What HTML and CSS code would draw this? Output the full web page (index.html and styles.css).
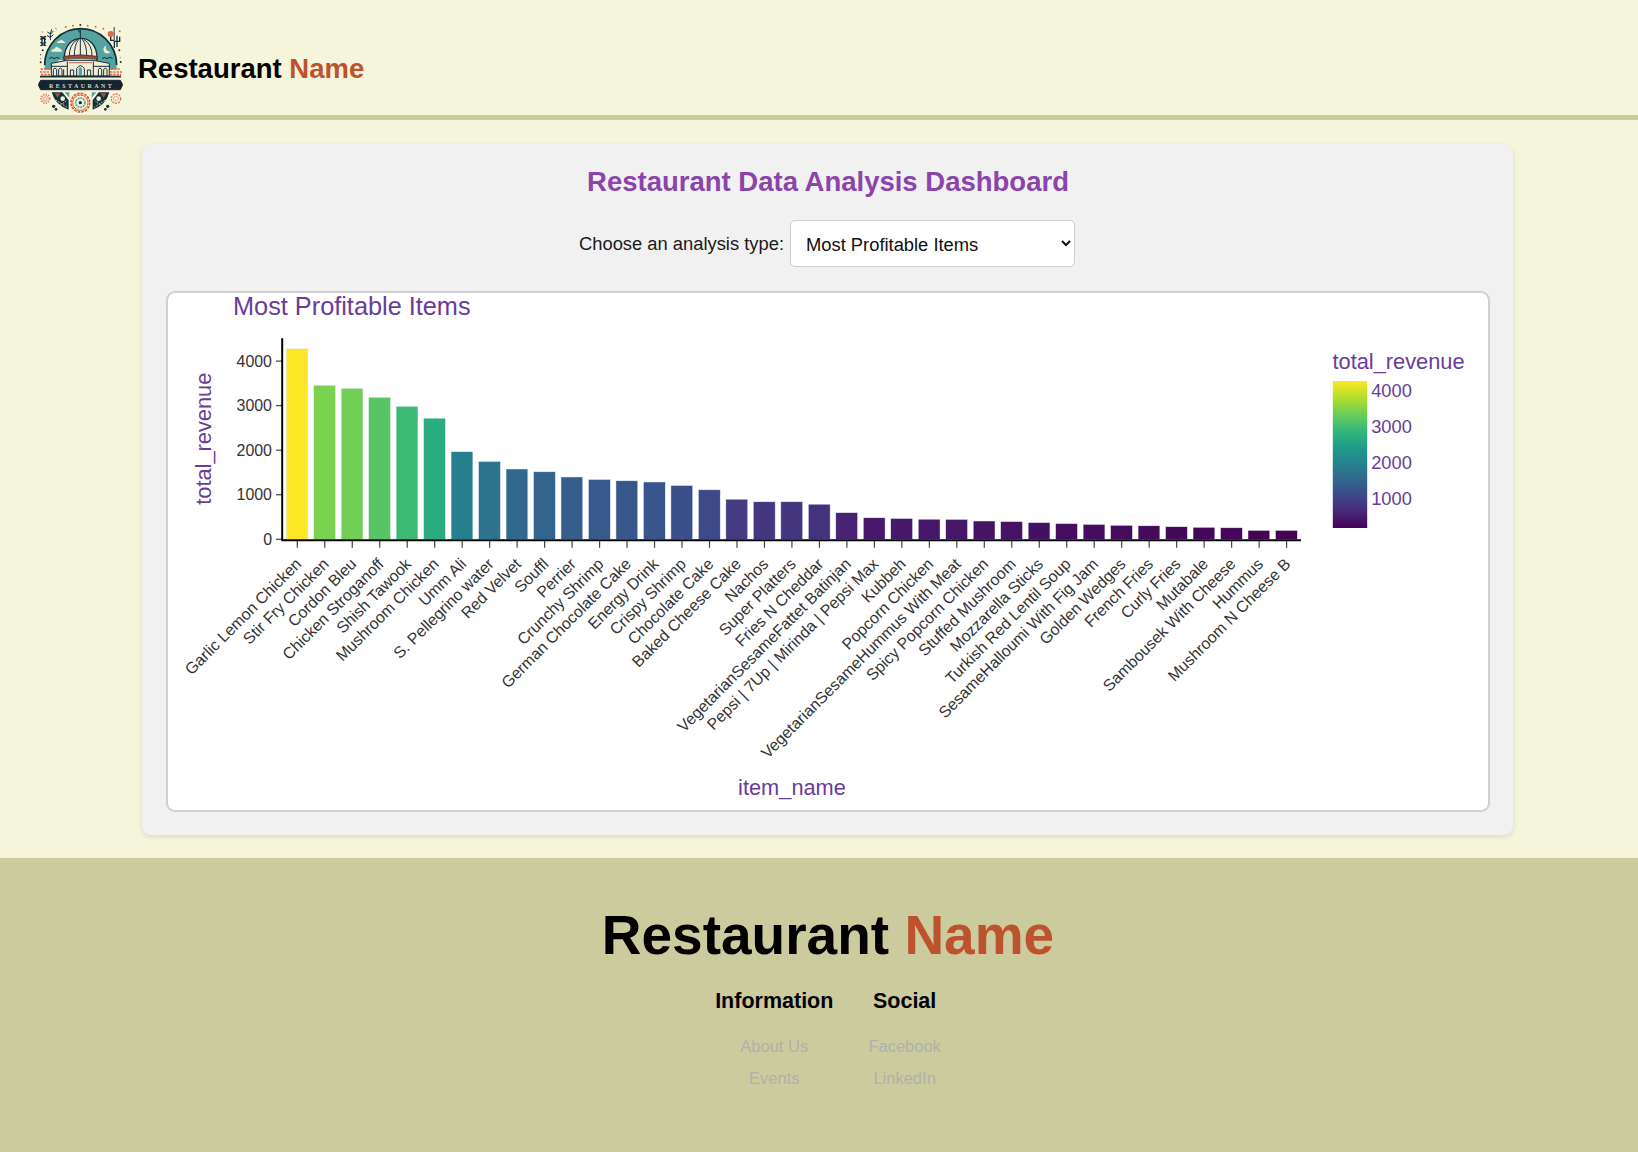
FILE: index.html
```html
<!DOCTYPE html>
<html lang="en">
<head>
<meta charset="utf-8">
<title>Restaurant Data Analysis Dashboard</title>
<link rel="stylesheet" href="styles.css">
</head>
<body>
<header class="header">
  <svg class="logo" viewBox="114 69 255 273" aria-label="Restaurant logo">
    <path d="M134 195a108 109 0 0 1 216 0v14H134z" fill="#55a3a1"/>
    <path d="M134 195a108 109 0 0 1 216 0" fill="none" stroke="#142f3a" stroke-width="5"/>
    <g fill="#f3ecd5">
      <path d="M153 155q2-9 10-8 6-13 14-2 9 2 9 10zM171 129q3-8 9-6 5-8 9 0 6 1 7 6zM171 185q12-12 20 0z"/>
      <path d="M318 137a12 12 0 1 0 14 18 13 13 0 0 1-14-18z"/>
      <path d="M193 176c-2-78 98-84 98-2l-2 12h-94z" stroke="#142f3a" stroke-width="4"/>
      <path d="M154 190l48-9h78l48 9v38H154z" stroke="#142f3a" stroke-width="3"/>
    </g>
    <g fill="none" stroke="#142f3a" stroke-width="3">
      <path d="M241 88v28M241 97q-9-2-4-10M208 172q-2-38 25-54M223 172q-1-38 14-55M241 116v56M260 172q1-38-14-55M276 172q2-38-25-54"/>
      <path d="M147 176q8-9 15 0 8-7 17-1M306 176q8-7 15 0 8-8 17-1"/>
      <path d="M154 199h48M280 199h50M160 228v-20q5-8 10 0v20M176 228v-20q5-8 10 0v20M191 228v-20M202 184v44M211 228v-18h10v18M262 228v-18h10v18M280 184v44M295 228v-20q5-8 10 0v20M311 228v-20q5-8 10 0v20M230 228v-22q12-18 23 0v22"/>
    </g>
    <path d="M236 228v-22q5-8 10 0v22z" fill="#55a3a1"/>
    <path d="M191 169q50-9 101 0v9q-50-6-101 0z" fill="#a64a35" stroke="#142f3a" stroke-width="2"/>
    <path d="M208 188h68" stroke="#a64a35" stroke-width="4" stroke-dasharray="4 2"/>
    <g fill="none" stroke="#df6849" stroke-width="5" stroke-dasharray="7 3">
      <path d="M122 207h29M120 216h31M123 224h28M332 207h29M330 216h36M330 224h34"/>
    </g>
    <path d="M120 230h243" stroke="#142f3a" stroke-width="5"/>
    <path d="M122 241h239l7 13-7 15H122l-7-15z" fill="#142430" stroke="#142430" stroke-width="3" stroke-linejoin="round"/>
    <text x="241" y="263" class="logo-text" textLength="188">RESTAURANT</text>
    <g fill="#142f3a">
      <circle cx="241" cy="75" r="3"/><circle cx="128" cy="151" r="3"/><circle cx="122" cy="164" r="2"/><circle cx="122" cy="187" r="3"/><circle cx="358" cy="151" r="3"/><circle cx="362" cy="186" r="3"/><circle cx="161" cy="319" r="5"/><circle cx="168" cy="328" r="4"/><circle cx="323" cy="319" r="5"/><circle cx="316" cy="328" r="4"/>
    </g>
    <g fill="#df6849">
      <circle cx="197" cy="81" r="3"/><circle cx="219" cy="77" r="3"/><circle cx="263" cy="77" r="3"/><circle cx="287" cy="80" r="3"/><circle cx="310" cy="86" r="3"/><circle cx="127" cy="96" r="2"/><circle cx="359" cy="94" r="3"/><circle cx="122" cy="176" r="2"/><circle cx="361" cy="172" r="2"/>
      <circle cx="332" cy="102" r="9"/><path d="M163 80l8 8-2 2zM296 117l3 6 3-5-3 12zM290 126l4-2v7z"/>
    </g>
    <path d="M343 82v62M351 107v34M343 124h16v-14M332 110v11h10" fill="none" stroke="#142f3a" stroke-width="4"/>
    <path d="M343 83v40" stroke="#f3ecd5" stroke-width="1.5"/>
    <path d="M121 109q8 5 17 0M121 118q8-5 17 0M121 127q8 5 17 0M121 137q8-5 17 0M126 109v29M134 109v29" fill="none" stroke="#142f3a" stroke-width="4"/>
    <path d="M155 88q-6 12-4 32M142 96l10 6 8-9M141 107l10 5 9-8" fill="none" stroke="#142f3a" stroke-width="3"/>
    <g fill="none">
      <circle cx="241" cy="308" r="28" stroke="#d65c3d" stroke-width="5" stroke-dasharray="8 3"/>
      <circle cx="241" cy="308" r="23" stroke="#d65c3d" stroke-width="3"/>
      <circle cx="241" cy="308" r="14" stroke="#55a3a1" stroke-width="5" stroke-dasharray="6 2"/>
      <circle cx="136" cy="296" r="12" stroke="#e0735b" stroke-width="8" stroke-dasharray="3 4"/>
      <circle cx="136" cy="296" r="5" stroke="#e0735b" stroke-width="2"/>
      <circle cx="348" cy="296" r="14" stroke="#e0735b" stroke-width="4" stroke-dasharray="6 3"/>
      <circle cx="348" cy="296" r="7" stroke="#e0735b" stroke-width="3" stroke-dasharray="3 2"/>
    </g>
    <circle cx="241" cy="308" r="5" fill="#142f3a"/>
    <path d="M155 277h32l19 24v28q-40-13-51-52zM328 277h-32l-18 24v28q40-13 50-52z" fill="#142f3a"/>
    <path d="M164 280h18l-10 13zM319 280h-18l10 13z" fill="#a64a35"/>
    <path d="M194 277h14v16zM289 277h-14v16z" fill="#55a3a1"/>
    <g fill="#f3ecd5"><circle cx="188" cy="296" r="7"/><circle cx="296" cy="296" r="7"/></g>
    <path d="M169 301l32 21M180 316l20-14M315 301l-32 21M304 316l-20-14" stroke="#f3ecd5" stroke-width="3" stroke-dasharray="3 3"/>
  </svg>
  <h1 class="brand">Restaurant <span class="accent">Name</span></h1>
</header>

<main class="panel">
  <h2 class="panel-title">Restaurant Data Analysis Dashboard</h2>
  <div class="picker">
    <label for="analysis">Choose an analysis type:</label>
    <select id="analysis" class="select"><option>Most Profitable Items</option></select>
  </div>
  <div class="chart-box">
    <svg id="chart" class="chart" viewBox="168 293 1320 517">
      <defs>
        <linearGradient id="viridis" x1="0" y1="1" x2="0" y2="0"></linearGradient>
      </defs>
      <text class="chart-title" x="233" y="315">Most Profitable Items</text>
      <text class="axis-title" text-anchor="middle" transform="translate(211.3 438.7) rotate(-90)">total_revenue</text>
      <text class="axis-title" text-anchor="middle" x="792" y="795">item_name</text>
      <text class="axis-title" x="1332.5" y="369.3">total_revenue</text>
      <rect x="1332.8" y="381" width="34.4" height="147" fill="url(#viridis)"/>
      <g id="plot"></g>
    </svg>
  </div>
</main>

<footer class="footer">
  <h2 class="footer-brand">Restaurant <span class="accent">Name</span></h2>
  <div class="footer-columns">
    <section class="footer-column">
      <h3>Information</h3>
      <a>About Us</a>
      <a>Events</a>
    </section>
    <section class="footer-column">
      <h3>Social</h3>
      <a>Facebook</a>
      <a>LinkedIn</a>
    </section>
  </div>
</footer>
<script src="chart.js"></script>
</body>
</html>
```
FILE: styles.css
```css
* {
  box-sizing: border-box;
}

body {
  margin: 0;
  min-height: 1152px;
  display: flex;
  flex-direction: column;
  background: #f5f5dc;
  font-family: "Liberation Sans", Arial, sans-serif;
  color: #000;
}

h1, h2, h3 {
  margin: 0;
}

.accent {
  color: #bc522e;
}

.header {
  display: flex;
  height: 120px;
  padding: 23px 38px 0;
  gap: 15px;
  border-bottom: 5px solid #cccb9d;
}

.logo {
  width: 85px;
  height: 91px;
  flex: none;
}

.logo-text {
  font: bold 18px "Liberation Serif", serif;
  fill: #d9dccb;
  text-anchor: middle;
}

.brand {
  margin-top: 30px;
  font-size: 27.5px;
  line-height: 32px;
}

.panel {
  width: 1371px;
  height: 691px;
  margin: 24px 0 0 142px;
  padding: 22px 23px 0 24px;
  background: #f1f1f1;
  border-radius: 9px;
  box-shadow: 0 2px 5px rgba(0, 0, 0, 0.1);
}

.panel-title {
  text-align: center;
  font-size: 27.5px;
  line-height: 32px;
  color: #8a44ab;
}

.picker {
  display: flex;
  justify-content: center;
  align-items: center;
  gap: 6px;
  height: 47px;
  margin-top: 22px;
  margin-right: 4px;
  padding-left: 2px;
  font-size: 18.35px;
  color: #1a1a1a;
}

.select {
  width: 285px;
  height: 47px;
  padding: 1px 0 0 11px;
  border: 1px solid #ccc;
  border-radius: 5px;
  background-color: #fff;
  color: #111;
  font: 18.35px "Liberation Sans", Arial, sans-serif;
}

.picker label {
  padding-top: 1px;
}

.chart-box {
  height: 521px;
  margin-top: 24px;
  border: 2px solid #d0d0d0;
  border-radius: 9px;
  background: #fff;
}

.chart {
  display: block;
  width: 100%;
  height: 517px;
}

.chart-title {
  font-size: 25.3px;
  fill: #683d99;
}

.axis-title {
  font-size: 21.8px;
  fill: #683d99;
}

.tick-label {
  font-size: 15.95px;
  fill: #333;
}

.scale-label {
  font-size: 18.3px;
  fill: #683d99;
}

.tick {
  stroke: #444;
  stroke-width: 1.2;
}

.axis {
  stroke: #000;
  stroke-width: 2;
}

.bar {
  stroke: #e5ecf6;
  stroke-width: 0.5;
}

.footer {
  flex: 1;
  margin-top: 23px;
  padding-top: 45px;
  background: #cccb9d;
  text-align: center;
}

.footer-brand {
  font-size: 55px;
  line-height: 64px;
  margin-left: 18px;
}

.footer-columns {
  display: flex;
  justify-content: center;
  gap: 35px;
  margin: 22px 0 0 18px;
}

.footer-column {
  display: flex;
  flex-direction: column;
  align-items: center;
}

.footer-column h3 {
  font-size: 21.5px;
  line-height: 24px;
  margin-bottom: 23px;
}

.footer-column a {
  font-size: 16.5px;
  line-height: 20px;
  margin-bottom: 12px;
  color: #adb2ad;
}
```
FILE: chart.js
```js
// Item name and the y coordinate of the top of its bar.
const items = [
  ["Garlic Lemon Chicken", 348.7], ["Stir Fry Chicken", 385.3], ["Cordon Bleu", 388.3],
  ["Chicken Stroganoff", 397.3], ["Shish Tawook", 406.3], ["Mushroom Chicken", 418.2],
  ["Umm Ali", 451.7], ["S. Pellegrino water", 461.5], ["Red Velvet", 469],
  ["Souffl", 471.8], ["Perrier", 477], ["Crunchy Shrimp", 479.5],
  ["German Chocolate Cake", 480.8], ["Energy Drink", 482], ["Crispy Shrimp", 485.5],
  ["Chocolate Cake", 489.8], ["Baked Cheese Cake", 499.2], ["Nachos", 501.8],
  ["Super Platters", 501.8], ["Fries N Cheddar", 504.2], ["VegetarianSesameFattet Batinjan", 512.7],
  ["Pepsi | 7Up | Mirinda | Pepsi Max", 517.8], ["Kubbeh", 518.5], ["Popcorn Chicken", 519.2],
  ["VegetarianSesameHummus With Meat", 519.4], ["Spicy Popcorn Chicken", 521], ["Stuffed Mushroom", 521.6],
  ["Mozzarella Sticks", 522.6], ["Turkish Red Lentil Soup", 523.6], ["SesameHalloumi With Fig Jam", 524.4],
  ["Golden Wedges", 525.3], ["French Fries", 525.8], ["Curly Fries", 526.7],
  ["Mutabale", 527.3], ["Sambousek With Cheese", 527.8], ["Hummus", 530.4],
  ["Mushroom N Cheese B", 530.4]
];

const viridis = ["#440154", "#482878", "#3e4989", "#31688e", "#26828e",
  "#1f9e89", "#35b779", "#6ece58", "#b5de2b", "#fde725"];
const zeroY = 539.3;
const step = 27.48;
const ns = "http://www.w3.org/2000/svg";
const plot = document.getElementById("plot");

function add(parent, name, attrs, text) {
  const node = document.createElementNS(ns, name);
  for (const key in attrs) node.setAttribute(key, attrs[key]);
  if (text !== undefined) node.textContent = text;
  parent.appendChild(node);
}

function colour(t) {
  const p = Math.min(Math.max(t, 0), 1) * (viridis.length - 1);
  const i = Math.min(Math.floor(p), viridis.length - 2);
  const mix = [1, 3, 5].map(k => {
    const a = parseInt(viridis[i].substr(k, 2), 16);
    const b = parseInt(viridis[i + 1].substr(k, 2), 16);
    return Math.round(a + (b - a) * (p - i));
  });
  return "rgb(" + mix.join(",") + ")";
}

viridis.forEach((c, i) => add(document.getElementById("viridis"), "stop",
  { offset: i / (viridis.length - 1), "stop-color": c }));

items.forEach(([name, top], i) => {
  const cx = 297.3 + i * step;
  add(plot, "rect", { class: "bar", x: cx - 11.1, y: top, width: 21.8, height: zeroY - top,
    fill: colour((530.4 - top) / (530.4 - 348.7)) });
  add(plot, "line", { class: "tick", x1: cx, x2: cx, y1: 541, y2: 547.8 });
  add(plot, "text", { class: "tick-label", "text-anchor": "end",
    transform: `translate(${cx + 5} 565) rotate(-45)` }, name);
});

[0, 1000, 2000, 3000, 4000].forEach((value, i) => {
  const y = zeroY - i * 44.55;
  add(plot, "line", { class: "tick", x1: 276, x2: 282, y1: y, y2: y });
  add(plot, "text", { class: "tick-label", "text-anchor": "end", x: 272, y: y + 5.7 }, value);
  if (value) add(plot, "text", { class: "scale-label", x: 1371.2, y: 541.6 - i * 36.25 }, value);
});

add(plot, "path", { class: "axis", fill: "none", d: "M282.2 338.3V540.2H1301" });
```
